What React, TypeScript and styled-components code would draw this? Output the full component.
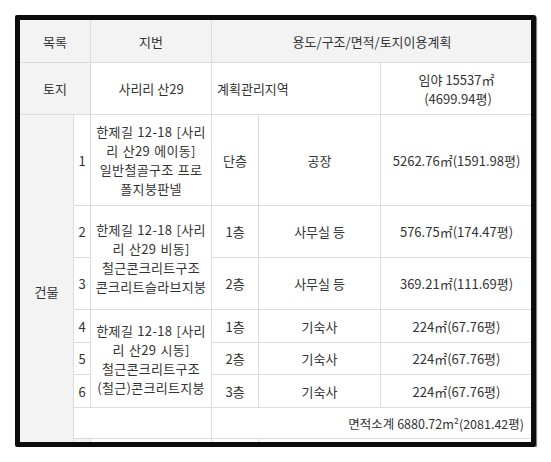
import styled, { createGlobalStyle } from 'styled-components';

const Global = createGlobalStyle`
  html, body {
    margin: 0;
    padding: 0;
    background: #ffffff;
  }
  body {
    font-family: "Noto Sans CJK KR", "Noto Sans", "Liberation Sans", sans-serif;
    color: #333;
  }
`

const Page = styled.div`
  padding: 15px 0 0 15px;
`

const Frame = styled.div`
  width: 511px;
  height: 422px;
  border: 5px solid #0c0c0c;
  border-radius: 2px;
  overflow: hidden;
  box-shadow: 1px 1px 1px rgba(0, 0, 0, 0.55);
`

const Table = styled.table`
  border-collapse: collapse;
  table-layout: fixed;
  width: 513px;
  margin: -1px 0 0 -1px;
  font-size: 13px;
  line-height: 19px;
  color: #333;
`

const Row = styled.tr<{ $h: number }>`
  height: ${p => p.$h}px;
`

const Head = styled.th`
  border: 1px solid #dcdcdc;
  background: #f3f3f3;
  font-weight: 400;
  text-align: center;
  vertical-align: middle;
  padding: 0 4px;
  white-space: nowrap;
`

const Cell = styled.td<{ $gray?: boolean; $align?: 'left' | 'center' | 'right' }>`
  border: 1px solid #dcdcdc;
  background: ${p => (p.$gray ? '#f3f3f3' : '#ffffff')};
  text-align: ${p => p.$align || 'center'};
  vertical-align: middle;
  padding: ${p => (p.$align === 'right' ? '0 8px 0 4px' : p.$align === 'left' ? '0 4px 0 5px' : '0 2px')};
  white-space: nowrap;
`

const Address = styled(Cell)`
  letter-spacing: 0.3px;
  word-spacing: 1px;
`

const Total = styled(Cell)`
  font-size: 12.5px;
`

type Floor = { no: number; floor: string; use: string; area: string; h: number }

const floors: Floor[] = [
  { no: 2, floor: '1층', use: '사무실 등', area: '576.75㎡(174.47평)', h: 52 },
  { no: 3, floor: '2층', use: '사무실 등', area: '369.21㎡(111.69평)', h: 52 },
  { no: 4, floor: '1층', use: '기숙사', area: '224㎡(67.76평)', h: 33 },
  { no: 5, floor: '2층', use: '기숙사', area: '224㎡(67.76평)', h: 32 },
  { no: 6, floor: '3층', use: '기숙사', area: '224㎡(67.76평)', h: 33 },
]

const Lines = ({ lines }: { lines: string[] }) => (
  <>
    {lines.map((l, i) => (
      <span key={i}>
        {i > 0 && <br />}
        {l}
      </span>
    ))}
  </>
)

export default function App() {
  return (
    <Page>
      <Global />
      <Frame>
        <Table>
          <colgroup>
            <col style={{ width: 54 }} />
            <col style={{ width: 17 }} />
            <col style={{ width: 121 }} />
            <col style={{ width: 47 }} />
            <col style={{ width: 122 }} />
            <col style={{ width: 152 }} />
          </colgroup>
          <tbody>
            <Row $h={43}>
              <Head colSpan={2}>목록</Head>
              <Head>지번</Head>
              <Head colSpan={3}>용도/구조/면적/토지이용계획</Head>
            </Row>
            <Row $h={52}>
              <Cell $gray colSpan={2}>토지</Cell>
              <Cell>사리리 산29</Cell>
              <Cell colSpan={2} $align="left">계획관리지역</Cell>
              <Cell>
                <Lines lines={['임야 15537㎡', '\u00a0(4699.94평)']} />
              </Cell>
            </Row>
            <Row $h={91}>
              <Cell $gray rowSpan={9}>건물</Cell>
              <Cell>1</Cell>
              <Address>
                <Lines lines={['한제길 12-18 [사리', '리 산29 에이동]', '일반철골구조 프로', '폴지붕판넬']} />
              </Address>
              <Cell>단층</Cell>
              <Cell>공장</Cell>
              <Cell>5262.76㎡(1591.98평)</Cell>
            </Row>
            {floors.map(f => (
              <Row key={f.no} $h={f.h}>
                <Cell>{f.no}</Cell>
                {f.no === 2 && (
                  <Address rowSpan={2}>
                    <Lines lines={['한제길 12-18 [사리', '리 산29 비동]', '철근콘크리트구조', '콘크리트슬라브지붕']} />
                  </Address>
                )}
                {f.no === 4 && (
                  <Address rowSpan={3}>
                    <Lines lines={['한제길 12-18 [사리', '리 산29 시동]', '철근콘크리트구조', '(철근)콘크리트지붕']} />
                  </Address>
                )}
                <Cell>{f.floor}</Cell>
                <Cell>{f.use}</Cell>
                <Cell>{f.area}</Cell>
              </Row>
            ))}
            <Row $h={31}>
              <Cell colSpan={2} />
              <Total colSpan={3} $align="right">면적소계 6880.72m²(2081.42평)</Total>
            </Row>
            <Row $h={30}>
              <Cell $gray />
              <Cell />
              <Cell />
              <Cell colSpan={3} />
            </Row>
          </tbody>
        </Table>
      </Frame>
    </Page>
  )
}
